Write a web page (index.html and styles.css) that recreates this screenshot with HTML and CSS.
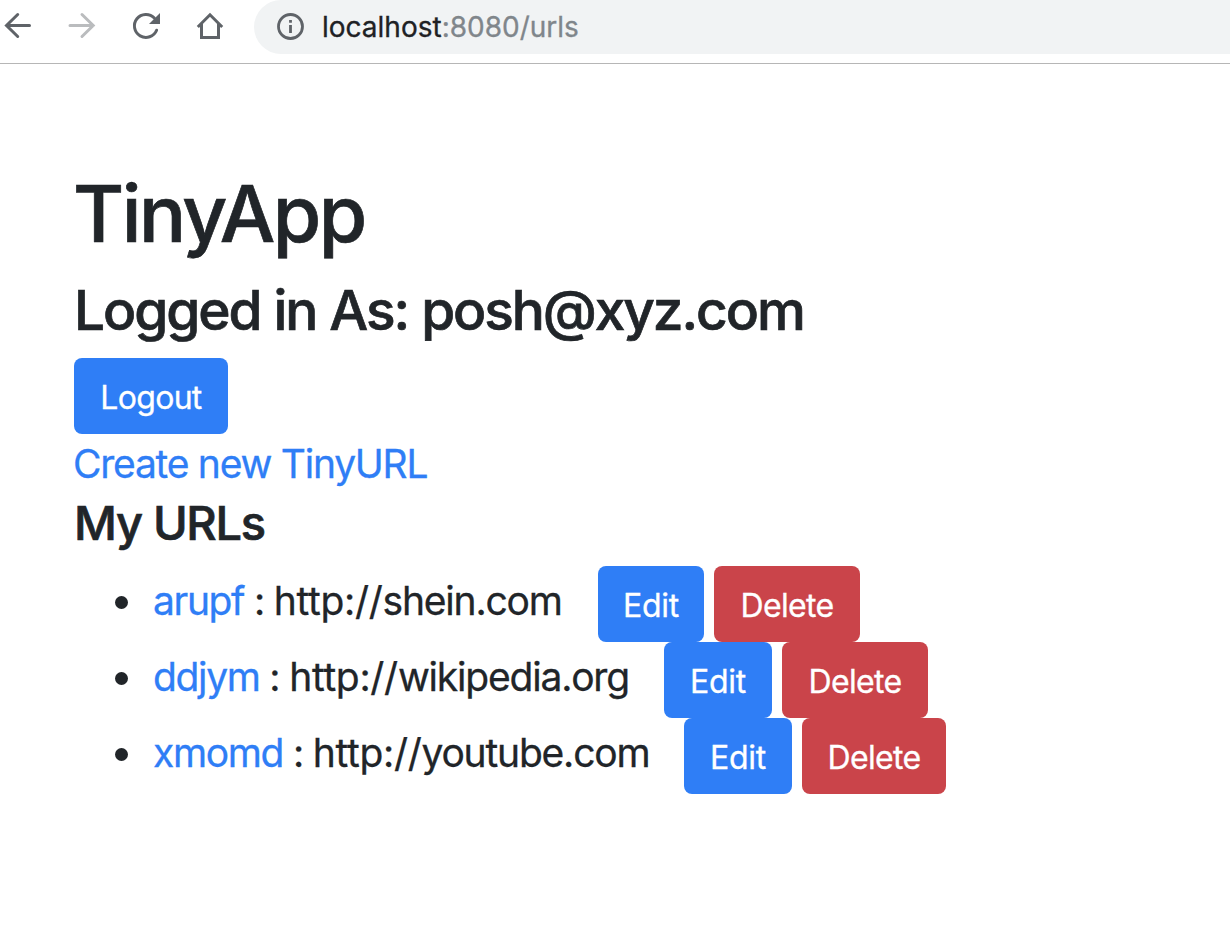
FILE: index.html
```html
<!DOCTYPE html>
<html lang="en">
<head>
<meta charset="utf-8">
<title>TinyApp</title>
<link rel="stylesheet" href="styles.css">
</head>
<body>
<header class="toolbar">
  <nav class="nav">
    <svg class="icon" viewBox="0 0 32 32"><path d="M27.500 15.500H4.500M15.700 4.500L4.500 15.500L15.700 26.500"/></svg>
    <svg class="icon icon-off" viewBox="0 0 32 32"><path d="M4 15.500H27M16 4.500L27.200 15.500L16 26.500"/></svg>
    <svg class="icon" viewBox="0 0 32 32"><path d="M26.600 20.200A11.500 11.500 0 1 1 24.300 8"/><path class="solid" d="M30 3V14H19Z"/></svg>
    <svg class="icon" viewBox="0 0 32 32"><path class="miter" d="M3.800 17L16 4.800L28.200 17M7.500 14V27.500H24.500V14"/></svg>
  </nav>
  <div class="address">
    <svg class="info" viewBox="0 0 28 28"><circle cx="14.500" cy="13.500" r="12"/><path d="M14.500 12V20M14.500 7V9.800"/></svg>
    <span class="url"><b>localhost</b>:8080/urls</span>
  </div>
</header>
<main class="page">
  <h1 class="title">TinyApp</h1>
  <h2 class="user">Logged in As: posh@xyz.com</h2>
  <button class="btn logout">Logout</button>
  <a class="create">Create new TinyURL</a>
  <h3 class="heading">My URLs</h3>
  <ul class="urls">
    <li class="row row-a"><span class="entry"><a>arupf</a> : <span class="scheme">http://</span>shein.com</span><button class="btn edit">Edit</button><button class="btn delete">Delete</button></li>
    <li class="row row-b"><span class="entry"><a>ddjym</a> : <span class="scheme">http://</span>wikipedia.org</span><button class="btn edit">Edit</button><button class="btn delete">Delete</button></li>
    <li class="row row-c"><span class="entry"><a>xmomd</a> : <span class="scheme">http://</span>youtube.com</span><button class="btn edit">Edit</button><button class="btn delete">Delete</button></li>
  </ul>
</main>
</body>
</html>
```
FILE: styles.css
```css
* { box-sizing: border-box; }
body { margin: 0; height: 948px; overflow: hidden; background: #fff; color: #212529; font-family: Inter, sans-serif; }
.toolbar { height: 64px; display: flex; align-items: flex-start; border-bottom: 1px solid #b6b6b6; }
.nav { display: flex; gap: 32px; width: 254px; padding: 10px 0 0 2px; flex: none; }
.icon { width: 32px; height: 32px; fill: none; stroke: #5f6368; stroke-width: 3; stroke-linecap: round; flex: none; }
.icon-off { stroke: #babcbe; }
.solid { fill: #5f6368; stroke: none; }
.miter { stroke-linecap: butt; }
.address { flex: 1; height: 54px; background: #f1f3f4; border-radius: 27px 0 0 27px; display: flex; align-items: center; padding-left: 22px; }
.info { width: 28px; height: 28px; fill: none; stroke: #5f6368; stroke-width: 2.800; }
.url { margin: -1px 0 0 18px; font-size: 28px; color: #80868b; white-space: nowrap; -webkit-text-stroke: 0.300px; }
.url b { font-weight: 400; color: #202124; }
.page { padding: 107px 0 0 74px; display: flex; flex-direction: column; align-items: flex-start; }
.title { margin: 0 0 0 -1px; font-size: 78.400px; font-weight: 500; line-height: 86px; letter-spacing: -2.500px; white-space: nowrap; -webkit-text-stroke: 0.700px; }
.user { margin: 20px 0 0; font-size: 55px; font-weight: 500; line-height: 66px; letter-spacing: -2.080px; word-spacing: 0.500px; white-space: nowrap; -webkit-text-stroke: 0.700px; }
.btn { height: 76px; border: 0; border-radius: 8px; padding: 2px 0 0; color: #fff; font: 400 32px Inter, sans-serif; letter-spacing: -0.700px; background: #2f7ef6; flex: none; -webkit-text-stroke: 0.300px; }
.logout { width: 154px; margin-top: 15px; }
.create { margin-left: -1px; font-size: 39px; line-height: 60px; letter-spacing: -1.250px; color: #2f7ef6; -webkit-text-stroke: 0.300px; }
.heading { margin: 0; font-size: 47px; line-height: 58px; font-weight: 500; letter-spacing: -1.300px; -webkit-text-stroke: 0.700px; }
.urls { margin: 14px 0 0; padding: 0; list-style: none; }
.row { height: 76px; display: flex; align-items: center; padding-left: 41px; }
.row::before { content: ""; width: 13px; height: 13px; border-radius: 50%; background: #212529; margin-right: 25px; margin-top: -4px; }
.entry { font-size: 39px; letter-spacing: -1.200px; white-space: nowrap; margin-top: -7px; width: 445px; -webkit-text-stroke: 0.300px; }
.row-b .entry { width: 511px; }
.row-c .entry { width: 531px; }
.entry a { color: #2f7ef6; letter-spacing: -1.350px; }
.scheme { letter-spacing: -0.300px; }
.edit { width: 106px; letter-spacing: -0.250px; }
.delete { width: 146px; margin-left: 10px; background: #ca444a; }
.row-b .edit, .row-c .edit { width: 108px; }
.row-c .delete { width: 144px; }
```
